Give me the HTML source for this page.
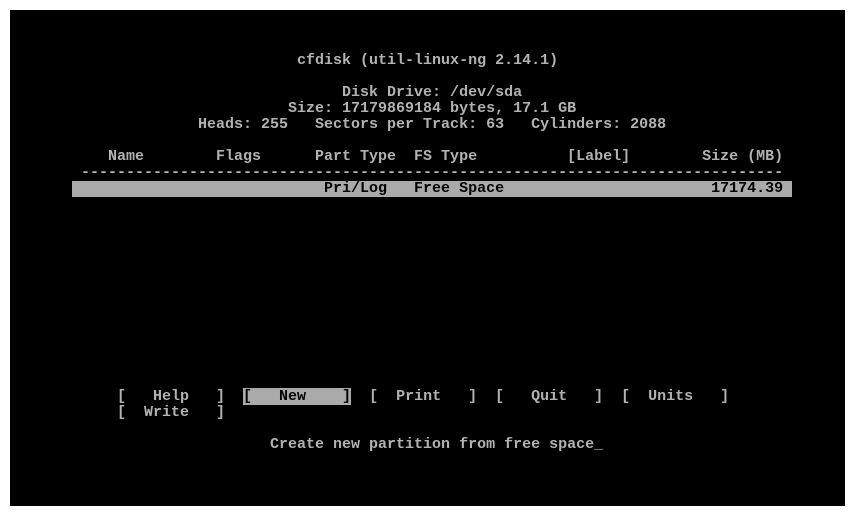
<!DOCTYPE html>
<html><head><meta charset="utf-8"><style>
html,body{margin:0;padding:0;background:#fff;width:856px;height:516px;overflow:hidden}
#scr{position:absolute;left:10px;top:10px;width:835px;height:496px;background:#000}
.r{position:absolute;left:72px;height:16px;line-height:16px;white-space:pre;font-family:"Liberation Mono",monospace;font-size:15px;font-weight:bold;color:#b2b2b2;}
.hl{background:#aaa;color:#000}
</style></head><body>
<div id="scr"></div>
<div class="r" style="top:53px">                         cfdisk (util-linux-ng 2.14.1)</div>
<div class="r" style="top:85px">                              Disk Drive: /dev/sda</div>
<div class="r" style="top:101px">                        Size: 17179869184 bytes, 17.1 GB</div>
<div class="r" style="top:117px">              Heads: 255   Sectors per Track: 63   Cylinders: 2088</div>
<div class="r" style="top:149px">    Name        Flags      Part Type  FS Type          [Label]        Size (MB)</div>
<div class="r" style="top:165px"> ------------------------------------------------------------------------------</div>
<div class="r hl" style="top:181px;width:720px">                            Pri/Log   Free Space                       17174.39 </div>
<div class="r" style="top:389px">     [   Help   ]  <span class="hl">[   New    ]</span>  [  Print   ]  [   Quit   ]  [  Units   ]</div>
<div class="r" style="top:405px">     [  Write   ]</div>
<div class="r" style="top:437px">                      Create new partition from free space_</div>
</body></html>
